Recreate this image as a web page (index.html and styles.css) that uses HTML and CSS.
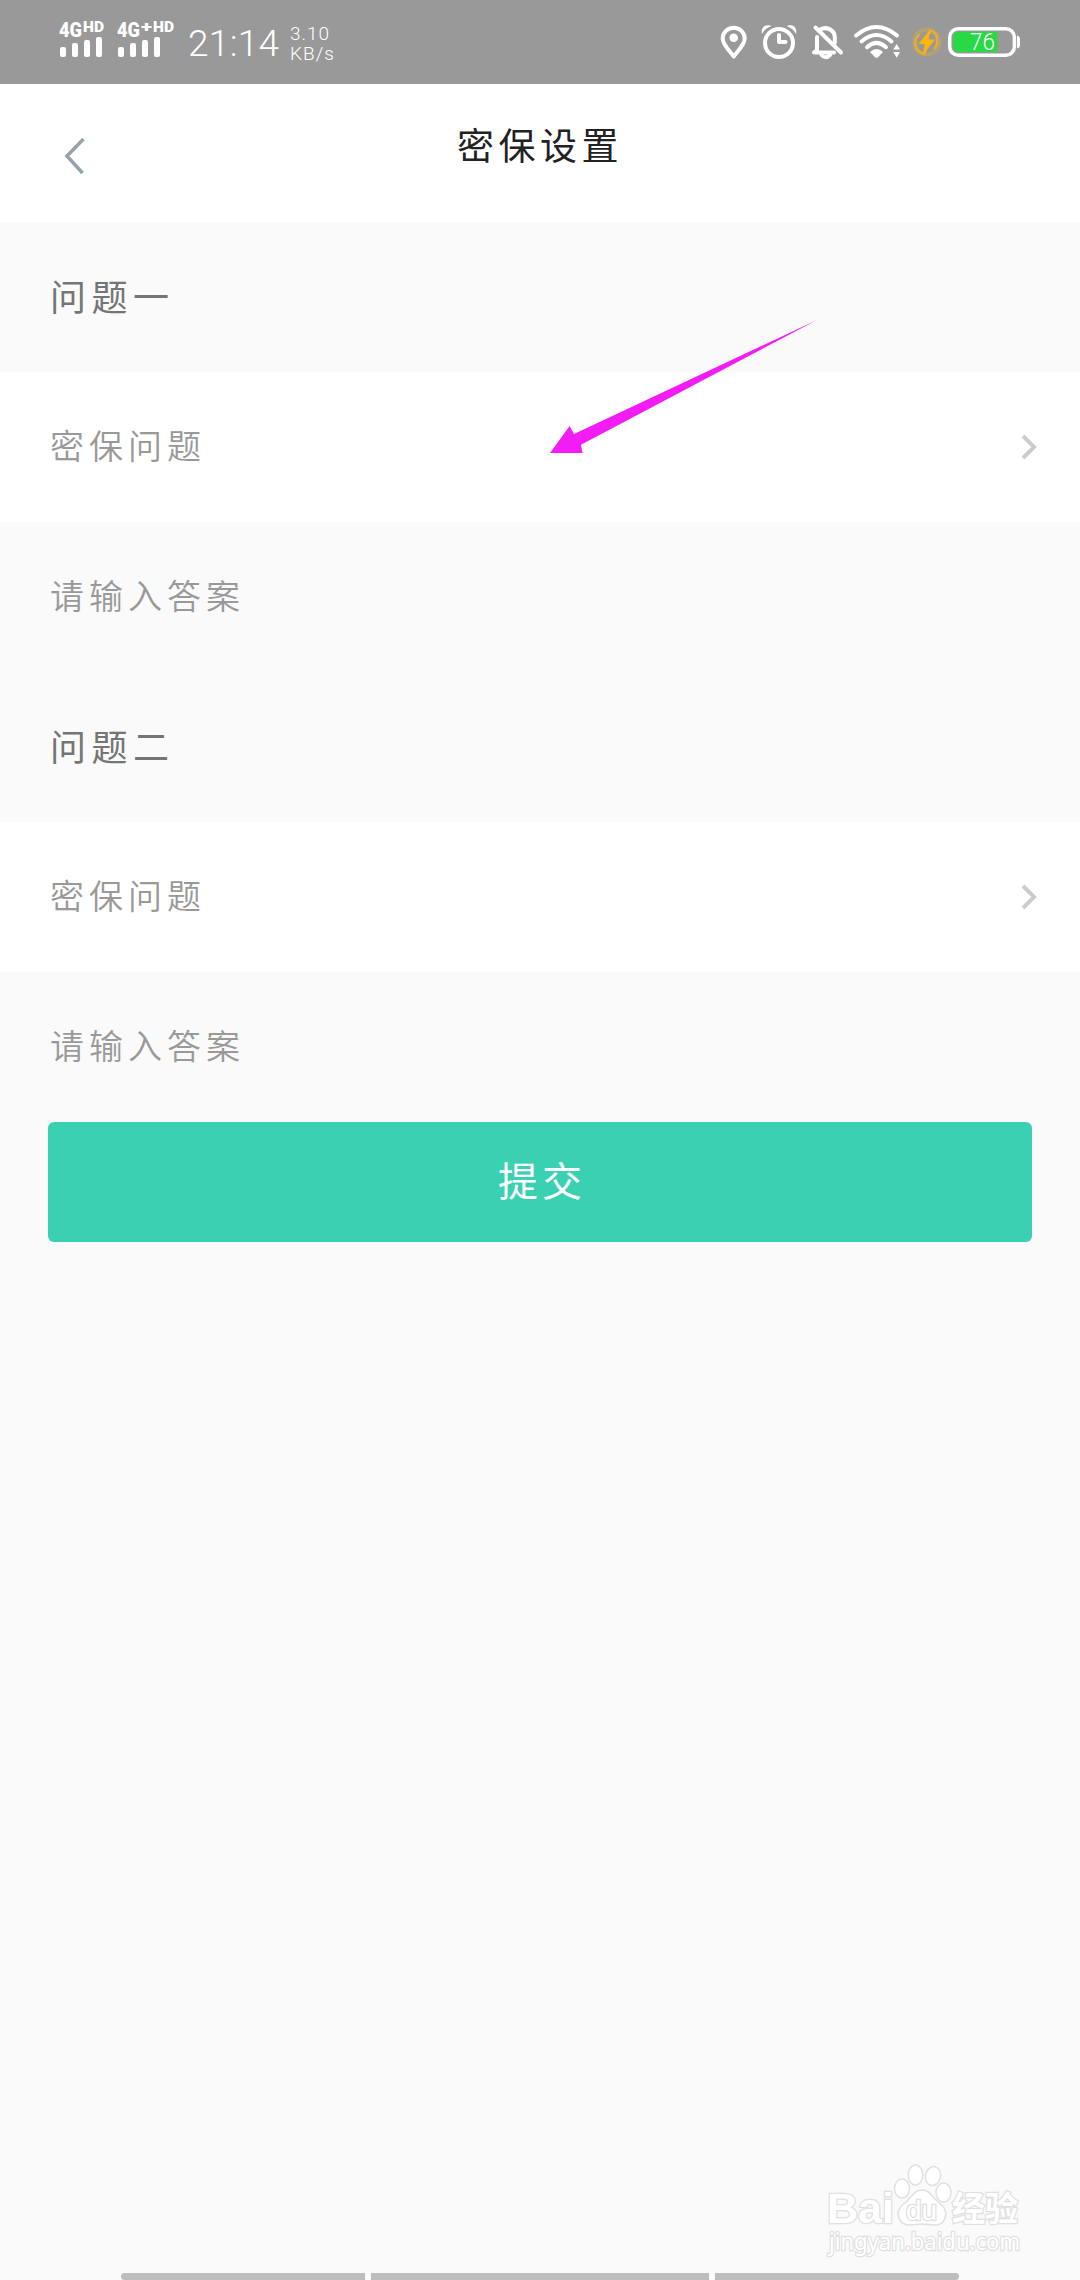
FILE: index.html
```html
<!DOCTYPE html>
<html lang="zh-CN">
<head>
  <meta charset="UTF-8">
  <meta name="viewport" content="width=device-width, initial-scale=1.0">
  <title>密保设置</title>
  <link rel="stylesheet" href="styles.css">
</head>
<body>

<div class="screen">
  <div class="status-bar">
    <svg class="signal" width="48" height="48" viewBox="59 14 48 48">
      <text class="net" x="60" y="37" textLength="23" lengthAdjust="spacingAndGlyphs">4G</text>
      <text class="hd" x="84" y="32" textLength="21" lengthAdjust="spacingAndGlyphs">HD</text>
      <rect x="61" y="47" width="6" height="10" rx="2"/>
      <rect x="73" y="43" width="6" height="14" rx="2"/>
      <rect x="85" y="40" width="6" height="17" rx="2"/>
      <rect x="97" y="37" width="6" height="20" rx="2"/>
    </svg>
    <svg class="signal second" width="60" height="48" viewBox="117 14 60 48">
      <text class="net" x="118" y="37" textLength="23" lengthAdjust="spacingAndGlyphs">4G</text>
      <text class="hd" x="142" y="32" textLength="11" lengthAdjust="spacingAndGlyphs">+</text>
      <text class="hd" x="154" y="32" textLength="21" lengthAdjust="spacingAndGlyphs">HD</text>
      <rect x="119" y="47" width="6" height="10" rx="2"/>
      <rect x="131" y="43" width="6" height="14" rx="2"/>
      <rect x="143" y="40" width="6" height="17" rx="2"/>
      <rect x="155" y="37" width="6" height="20" rx="2"/>
    </svg>
    <div class="time">21:14</div>
    <div class="speed">
      <span>3.10</span>
      <span>KB/s</span>
    </div>

    <div class="status-icons">
      <!-- location -->
      <svg width="28" height="36" viewBox="720 24 28 36">
        <path class="line" d="M733.7 56.5C730 51 722.7 45 722.7 38.5A11 10.8 0 0 1 744.7 38.5C744.7 45 737.5 51 733.7 56.5Z"/>
        <circle cx="733.7" cy="37.7" r="4.3"/>
      </svg>
      <!-- alarm -->
      <svg width="36" height="36" viewBox="761 24 36 36">
        <circle class="line" cx="779" cy="43" r="14"/>
        <path class="line" d="M779 35V42H785.5"/>
        <path d="M762 34C760.5 27.500 765 23.500 771.500 26Q764.500 28.500 762 34ZM796 34C797.500 27.500 793 23.500 786.500 26Q793.500 28.500 796 34Z"/>
      </svg>
      <!-- muted bell -->
      <svg width="32" height="36" viewBox="811 24 32 36">
        <path class="line" d="M817 37V50.500L814 52.500H834M820 29.500Q826 26.500 831 30Q834.800 32.500 834.800 37V43"/>
        <path class="line" d="M821.500 55Q825.500 59.500 830 55"/>
        <path class="line" d="M815.500 27.500L841 52.500"/>
      </svg>
      <!-- wifi -->
      <svg width="47" height="36" viewBox="853 24 47 36">
        <path class="line" d="M856 35.500Q876.500 18.500 897 35.500M861.500 41.500Q876.500 28.500 891.500 41.500M867 47.200Q876.500 38.500 886 47.200"/>
        <path d="M870 52Q876.500 46 883 52L878 57.200Q876.500 58.500 875 57.200Z"/>
        <path d="M893.200 49.500L896.700 44L900 49.500ZM893.200 52L896.700 57.800L900 52Z"/>
      </svg>
      <!-- charging -->
      <svg width="32" height="36" viewBox="911 24 32 36">
        <circle class="glow" cx="926.800" cy="42" r="12.500"/>
        <path class="ring" d="M919.500 34.500A11 11 0 0 0 924.500 54L926 49M930.500 29.500L929.500 34M931.500 30.500A12 12 0 0 1 934 49"/>
        <path class="bolt" d="M930.500 29L918.500 44H924.800L923 54.500L935 39.500H928.500Z"/>
      </svg>
      <!-- battery -->
      <svg width="74" height="36" viewBox="947 24 74 36">
        <path class="level" d="M997.300 31.700V52H959Q953 52 953 46V38Q953 31.700 959 31.700Z"/>
        <rect class="case" x="949.700" y="28.700" width="64.700" height="26.600" rx="8.500"/>
        <path d="M1017 35.500Q1020 36.500 1020 39V45Q1020 47.500 1017 48.500Z"/>
        <text class="percent" x="970" y="50" textLength="25" lengthAdjust="spacingAndGlyphs">76</text>
      </svg>
    </div>
  </div>

  <div class="header">
    <svg class="back" width="24" height="40" viewBox="0 0 24 40">
      <path d="M20.500 3L4 20L19.500 37"/>
    </svg>
    <h1>密保设置</h1>
  </div>

  <div class="row label">问题一</div>
  <div class="row select">
    <span>密保问题</span>
    <svg class="chevron" width="18" height="28" viewBox="0 0 18 28">
      <path d="M2 3L13 14L2 25"/>
    </svg>
  </div>
  <div class="row answer">请输入答案</div>
  <div class="row label">问题二</div>
  <div class="row select">
    <span>密保问题</span>
    <svg class="chevron" width="18" height="28" viewBox="0 0 18 28">
      <path d="M2 3L13 14L2 25"/>
    </svg>
  </div>
  <div class="row answer">请输入答案</div>
  <button class="submit">提交</button>

  <div class="nav-hints">
    <div class="hint left"></div>
    <div class="hint middle"></div>
    <div class="hint right"></div>
  </div>

  <svg class="arrow" width="270" height="136" viewBox="549 319 270 136">
    <path d="M817 320L574 434L569.600 426L550 453H582.500L581 444.700Z"/>
  </svg>

  <svg class="watermark" width="210" height="100" viewBox="820 2160 210 100">
    <text class="brand" x="827" y="2223" textLength="67" lengthAdjust="spacingAndGlyphs">Bai</text>
    <ellipse cx="902" cy="2188.500" rx="7.500" ry="9.500"/>
    <ellipse cx="915.500" cy="2175" rx="7.300" ry="10"/>
    <ellipse cx="933" cy="2176" rx="7.500" ry="9.500" transform="rotate(12 933 2176)"/>
    <ellipse cx="943.500" cy="2192.500" rx="7.500" ry="9.500"/>
    <path d="M922 2190C930 2190 932 2197 938 2202C945 2207 948 2213 944 2220C940 2228 931 2224 922 2224C913 2224 905 2228 900 2220C896 2213 899 2207 906 2202C912 2197 914 2190 922 2190Z"/>
    <text class="du" x="906" y="2220" textLength="31" lengthAdjust="spacingAndGlyphs">du</text>
    <text class="brand cn" x="952" y="2221" textLength="66" lengthAdjust="spacingAndGlyphs">经验</text>
    <text class="url" x="829" y="2250" textLength="191" lengthAdjust="spacingAndGlyphs">jingyan.baidu.com</text>
  </svg>
</div>

</body>
</html>
```
FILE: styles.css
```css
* {
  box-sizing: border-box;
}
body {
  margin: 0;
  background: #fafafa;
  font-family: "Noto Sans CJK SC", sans-serif;
}
.screen {
  position: relative;
  width: 1080px;
  height: 2280px;
  display: flex;
  flex-direction: column;
  overflow: hidden;
}
.screen svg {
  display: block;
  flex: none;
  overflow: visible;
}

/* status bar */
.status-bar {
  height: 84px;
  padding: 0 59px 0 58px;
  display: flex;
  align-items: center;
  flex: none;
  background: #999;
  color: #fff;
  font-family: Roboto, sans-serif;
}
.status-bar svg {
  fill: #fff;
}
.signal {
  margin-top: -8px;
}
.second {
  margin-left: 10px;
}
.net {
  font-size: 21px;
  font-weight: 900;
}
.hd {
  font-size: 14px;
  font-weight: 900;
}
.time {
  width: 102px;
  padding-top: 3px;
  padding-left: 12px;
  font-size: 37px;
  font-weight: 300;
  line-height: 81px;
  letter-spacing: 0.3px;
}
.speed {
  display: flex;
  flex-direction: column;
  margin-top: 3px;
  margin-left: 12px;
  font-size: 19px;
  font-weight: 300;
  line-height: 20px;
  letter-spacing: 1px;
}
.status-icons {
  display: flex;
  gap: 13px;
  margin-left: auto;
}
.status-icons svg:nth-child(3) {
  margin-left: 1px;
}
.status-icons svg:nth-child(4) {
  margin-left: -3px;
}
.status-icons svg:nth-child(5) {
  margin-left: -2px;
}
.status-icons svg:nth-child(6) {
  margin-left: -9px;
}
.line {
  fill: none;
  stroke: #fff;
  stroke-width: 4;
  stroke-linecap: round;
  stroke-linejoin: round;
}
.glow,
.ring {
  fill: none;
  stroke: #e5ae2e;
  stroke-width: 2.5;
}
.glow {
  stroke-width: 4;
  opacity: 0.35;
}
.screen .bolt {
  fill: #ffb60a;
}
.screen .level {
  fill: #29d845;
}
.case {
  fill: none;
  stroke: #fff;
  stroke-width: 3.5;
}
.percent {
  font-size: 23px;
  font-weight: 300;
}

/* header */
.header {
  height: 138px;
  display: grid;
  grid-template-columns: 62px 1fr 62px;
  flex: none;
  background: #fff;
}
.back {
  margin-top: 52px;
  margin-left: 63px;
  fill: none;
  stroke: #98a2ab;
  stroke-width: 3.5;
}
h1 {
  margin: 0;
  color: #222;
  font-size: 37px;
  font-weight: 400;
  line-height: 121px;
  letter-spacing: 4.5px;
  text-align: center;
}

/* form */
.row {
  height: 150px;
  padding: 0 41px 5px 50px;
  display: flex;
  align-items: center;
  justify-content: space-between;
  flex: none;
  color: #999;
  font-size: 34px;
  font-weight: 350;
  letter-spacing: 5px;
}
.label {
  color: #757575;
  font-size: 36px;
  font-weight: 400;
  letter-spacing: 5.5px;
}
.select {
  background: #fff;
}
.chevron {
  margin-top: 4px;
  fill: none;
  stroke: #ccc;
  stroke-width: 4;
}
.submit {
  height: 120px;
  margin: 0 48px;
  padding: 0 0 6px 4px;
  flex: none;
  border: none;
  border-radius: 6px;
  background: #3ad1b3;
  color: #fff;
  font-family: inherit;
  font-size: 40px;
  letter-spacing: 4px;
}

/* gesture hints */
.nav-hints {
  display: flex;
  justify-content: center;
  gap: 6px;
  margin-top: auto;
}
.hint {
  width: 244px;
  height: 7px;
  background: #bdbdbd;
}
.left {
  border-radius: 4px 0 0 4px;
}
.middle {
  width: 338px;
}
.right {
  border-radius: 0 4px 4px 0;
}

/* overlays */
.arrow {
  position: absolute;
  left: 549px;
  top: 319px;
  fill: #f41cf4;
}
.watermark {
  position: absolute;
  left: 820px;
  top: 2160px;
  fill: #fff;
  stroke: #e0e0e0;
  stroke-width: 1.5;
}
.watermark text {
  paint-order: stroke;
  stroke-width: 2.5;
}
.brand {
  font-family: "Liberation Sans", sans-serif;
  font-size: 43px;
  font-weight: 700;
}
.cn {
  font-family: "Noto Sans CJK SC", sans-serif;
  font-size: 34px;
}
.du {
  font-family: "Liberation Sans", sans-serif;
  font-size: 27px;
}
.url {
  font-family: "Noto Sans", sans-serif;
  font-size: 23px;
}
```
